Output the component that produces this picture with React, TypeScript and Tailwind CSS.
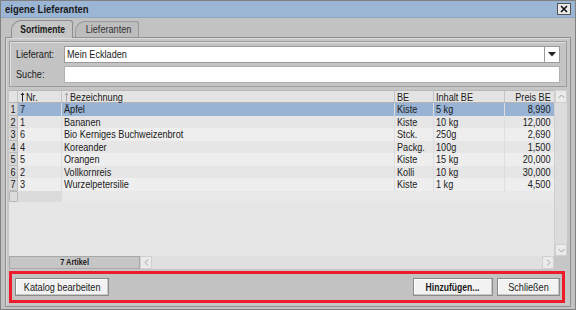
import React from "react";

const rows = [
  { n: "7", name: "Äpfel", be: "Kiste", inh: "5 kg", preis: "8,990" },
  { n: "1", name: "Bananen", be: "Kiste", inh: "10 kg", preis: "12,000" },
  { n: "6", name: "Bio Kerniges Buchweizenbrot", be: "Stck.", inh: "250g", preis: "2,690" },
  { n: "4", name: "Koreander", be: "Packg.", inh: "100g", preis: "1,500" },
  { n: "5", name: "Orangen", be: "Kiste", inh: "15 kg", preis: "20,000" },
  { n: "2", name: "Vollkornreis", be: "Kolli", inh: "10 kg", preis: "30,000" },
  { n: "3", name: "Wurzelpetersilie", be: "Kiste", inh: "1 kg", preis: "4,500" },
];

/* condensed text: the reference uses a narrow UI face */
function T({ children, o = "l" }: { children: React.ReactNode; o?: "l" | "c" | "r" }) {
  const origin = o === "l" ? "origin-left" : o === "c" ? "origin-center" : "origin-right";
  return <span className={`inline-block whitespace-nowrap scale-x-[0.83] ${origin}`}>{children}</span>;
}

function SortArrow({ light }: { light?: boolean }) {
  const c = light ? "#a8a8a8" : "#222";
  return (
    <svg width="5" height="10" viewBox="0 0 5 10" className="shrink-0 mr-[1px]">
      <path d="M2.5 0.5 L0.5 3 H4.5 Z" fill={c} />
      <rect x="2" y="2" width="1" height="7.5" fill={c} />
    </svg>
  );
}

const btn =
  "h-[18px] bg-[#f2f2f2] border border-[#8a8a8a] shadow-[inset_-1px_-1px_0_#c8c8c8,inset_1px_1px_0_#ffffff] text-[11px] leading-none flex items-center justify-center";

export default function App() {
  return (
    <div
      className="w-[576px] h-[310px] bg-[#c2c2c2] border border-[#808080] flex flex-col text-[11px] text-[#1a1a1a] overflow-hidden"
      style={{ fontFamily: "'Liberation Sans', Arial, sans-serif" }}
    >
      {/* Title bar */}
      <div className="h-[17px] shrink-0 bg-[#9bb5d4] border-b border-[#8ea6c4] flex items-center justify-between pl-[4px] pr-[4px]">
        <span className="inline-block whitespace-nowrap font-bold text-[11px] leading-none scale-x-[0.86] origin-left">
          eigene Lieferanten
        </span>
        <div className="w-[14px] h-[12px] bg-[#e8e8e8] border border-[#555] flex items-center justify-center">
          <svg width="8" height="8" viewBox="0 0 8 8">
            <path d="M1 1 L7 7 M7 1 L1 7" stroke="#111" strokeWidth="1.6" />
          </svg>
        </div>
      </div>

      {/* Tabs */}
      <div className="h-[19px] shrink-0 flex items-end pl-[10px]">
        <div className="relative h-[18px] w-[62px] bg-[#c6c6c6] border border-b-0 border-[#8e8e8e] rounded-tl-[10px] rounded-tr-[3px] flex items-center justify-center font-bold -mb-[1px] z-10 pl-[2px]">
          <span className="inline-block whitespace-nowrap scale-x-[0.78] origin-center">Sortimente</span>
        </div>
        <div className="h-[16px] w-[64px] ml-[2px] bg-[#bdbdbd] border border-b-0 border-[#9a9a9a] rounded-tl-[10px] rounded-tr-[3px] flex items-center justify-center text-[#333] pl-[3px]">
          <T o="c">Lieferanten</T>
        </div>
      </div>

      {/* Panel */}
      <div className="flex-1 mx-[4px] mb-[2px] border border-[#909090] bg-[#c6c6c6] flex flex-col p-[3px] shadow-[inset_1px_1px_0_#dadada]">
        {/* Group box */}
        <div className="h-[46px] shrink-0 border border-[#9c9c9c] shadow-[inset_1px_1px_0_#e0e0e0] bg-[#c4c4c4] flex flex-col justify-center gap-[3px] pl-[6px] pr-[6px]">
          <div className="flex items-center h-[17px]">
            <span className="w-[48px] shrink-0">
              <T>Lieferant:</T>
            </span>
            <div className="flex-1 h-[17px] bg-white border border-[#9a9a9a] flex items-center">
              <span className="flex-1 pl-[2px]">
                <T>Mein Eckladen</T>
              </span>
              <div className="w-[15px] h-full border-l border-[#9a9a9a] bg-white flex items-center justify-center">
                <svg width="8" height="5" viewBox="0 0 8 5">
                  <path d="M0 0 H8 L4 4.5 Z" fill="#222" />
                </svg>
              </div>
            </div>
          </div>
          <div className="flex items-center h-[17px]">
            <span className="w-[48px] shrink-0">
              <T>Suche:</T>
            </span>
            <div className="flex-1 h-[17px] bg-white border border-[#b0b0b0]" />
          </div>
        </div>

        {/* Table */}
        <div className="mt-[3px] h-[179px] shrink-0 flex flex-col">
          <div className="flex-1 flex min-h-0">
            <div className="flex-1 flex flex-col bg-[#e6e6e6] min-w-0">
              {/* header */}
              <div className="h-[13px] shrink-0 flex bg-[#e3e3e3] border-t border-[#b8b8b8] border-b border-b-[#b4b4b4] leading-[12px]">
                <div className="w-[9px] shrink-0 border-r border-[#c4c4c4]" />
                <div className="w-[44px] shrink-0 border-r border-[#c4c4c4] flex items-center pl-[2px]">
                  <SortArrow />
                  <T>Nr.</T>
                </div>
                <div className="w-[333px] shrink-0 border-r border-[#c4c4c4] flex items-center pl-[2px]">
                  <SortArrow light />
                  <T>Bezeichnung</T>
                </div>
                <div className="w-[39px] shrink-0 border-r border-[#c4c4c4] pl-[2px]">
                  <T>BE</T>
                </div>
                <div className="w-[71px] shrink-0 border-r border-[#c4c4c4] pl-[2px]">
                  <T>Inhalt BE</T>
                </div>
                <div className="flex-1 text-right pr-[3px]">
                  <T o="r">Preis BE</T>
                </div>
              </div>
              {/* rows */}
              {rows.map((r, i) => {
                const sel = i === 0;
                const bg = sel ? "bg-[#98b3d3]" : i % 2 === 1 ? "bg-[#e6e6e6]" : "bg-[#eeeeee]";
                return (
                  <div key={i} className={`h-[12.5px] shrink-0 flex leading-[12px] ${bg}`}>
                    <div className="w-[9px] shrink-0 bg-[#d6d6d6] border-r border-b border-[#bdbdbd] text-center leading-[12px]">
                      <T o="c">{i + 1}</T>
                    </div>
                    <div className="w-[44px] shrink-0 pl-[2px] border-r border-[#dedede]">
                      <T>{r.n}</T>
                    </div>
                    <div className="w-[333px] shrink-0 pl-[2px] border-r border-[#dedede]">
                      <T>{r.name}</T>
                    </div>
                    <div className="w-[39px] shrink-0 pl-[2px] border-r border-[#dedede]">
                      <T>{r.be}</T>
                    </div>
                    <div className="w-[71px] shrink-0 pl-[2px] border-r border-[#dedede]">
                      <T>{r.inh}</T>
                    </div>
                    <div className="flex-1 text-right pr-[3px]">
                      <T o="r">{r.preis}</T>
                    </div>
                  </div>
                );
              })}
              <div className="h-[11px] shrink-0 flex">
                <div className="w-[9px] shrink-0 bg-[#dcdcdc] border border-[#b4b4b4] rounded-[1px]" />
                <div className="w-[44px] shrink-0 bg-[#dbdbdb]" />
                <div className="flex-1 bg-[#e8e8e8]" />
              </div>
              <div className="flex-1 bg-[#e6e6e6]" />
            </div>
            {/* vertical scrollbar */}
            <div className="w-[13px] shrink-0 flex flex-col bg-[#dcdcdc] border-l border-[#cfcfcf]">
              <div className="h-[13px] bg-[#ebebeb] border border-[#d0d0d0] flex items-center justify-center">
                <svg width="7" height="5" viewBox="0 0 7 5">
                  <path d="M0.5 4 L3.5 1 L6.5 4" stroke="#a0a0a0" strokeWidth="1" fill="none" />
                </svg>
              </div>
              <div className="flex-1" />
              <div className="h-[12px] bg-[#ebebeb] border border-[#d0d0d0] flex items-center justify-center">
                <svg width="7" height="5" viewBox="0 0 7 5">
                  <path d="M0.5 1 L3.5 4 L6.5 1" stroke="#a0a0a0" strokeWidth="1" fill="none" />
                </svg>
              </div>
            </div>
          </div>
          {/* horizontal status / scrollbar */}
          <div className="h-[13px] shrink-0 flex bg-[#dcdcdc]">
            <div className="w-[131px] shrink-0 bg-[#c6c6c6] border border-[#a8a8a8] flex items-center justify-center font-bold text-[9px] leading-none">
              <span className="inline-block whitespace-nowrap scale-x-[0.82] origin-center">7 Artikel</span>
            </div>
            <div className="w-[12px] shrink-0 bg-[#ebebeb] border border-[#d0d0d0] flex items-center justify-center">
              <svg width="5" height="7" viewBox="0 0 5 7">
                <path d="M4 0.5 L1 3.5 L4 6.5" stroke="#a0a0a0" strokeWidth="1" fill="none" />
              </svg>
            </div>
            <div className="flex-1 bg-[#e0e0e0]" />
            <div className="w-[12px] shrink-0 bg-[#ebebeb] border border-[#d0d0d0] flex items-center justify-center">
              <svg width="5" height="7" viewBox="0 0 5 7">
                <path d="M1 0.5 L4 3.5 L1 6.5" stroke="#a0a0a0" strokeWidth="1" fill="none" />
              </svg>
            </div>
            <div className="w-[13px] shrink-0 bg-[#c6c6c6]" />
          </div>
        </div>

        {/* Red button bar */}
        <div className="mt-[2px] h-[32px] shrink-0 mr-[2px] border-[3px] border-[#ee1c2b] bg-[#c2c2c2] flex items-center pl-[3px] pr-[2px]">
          <button className={`${btn} w-[94px]`}>
            <T o="c">Katalog bearbeiten</T>
          </button>
          <div className="flex-1" />
          <button className={`${btn} w-[80px] font-bold`}>
            <span className="inline-block whitespace-nowrap scale-x-[0.78] origin-center">Hinzufügen...</span>
          </button>
          <button className={`${btn} w-[63px] ml-[4px]`}>
            <T o="c">Schließen</T>
          </button>
        </div>
      </div>
    </div>
  );
}
